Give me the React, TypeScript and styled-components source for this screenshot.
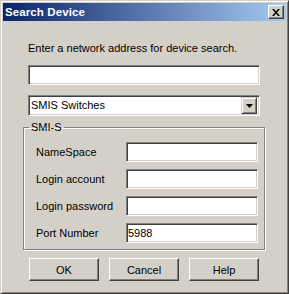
import React from 'react';
import styled, { createGlobalStyle } from 'styled-components';

const GlobalStyle = createGlobalStyle`
  html, body {
    margin: 0;
    padding: 0;
    background: #d4d0c8;
  }
  body {
    font-family: 'Liberation Sans', Arial, sans-serif;
    font-size: 11px;
    color: #000;
  }
`;

const Window = styled.div`
  box-sizing: border-box;
  width: 289px;
  height: 294px;
  background: #d4d0c8;
  border: 1px solid;
  border-color: #d4d0c8 #404040 #404040 #d4d0c8;
  box-shadow: inset 1px 1px #fff, inset -1px -1px #808080;
  padding: 2px;
  display: flex;
  flex-direction: column;
`;

const TitleBar = styled.div`
  height: 18px;
  display: flex;
  align-items: center;
  justify-content: space-between;
  padding: 0 2px 0 2px;
  background: linear-gradient(to right, #0a246a, #a6caf0);
`;

const Title = styled.span`
  color: #fff;
  font-weight: bold;
  font-size: 11.5px;
  letter-spacing: 0.1px;
`;

const CloseButton = styled.div`
  box-sizing: border-box;
  width: 16px;
  height: 14px;
  background: #d4d0c8;
  border: 1px solid;
  border-color: #fff #404040 #404040 #fff;
  box-shadow: inset -1px -1px #808080;
  display: flex;
  align-items: center;
  justify-content: center;
`;

const Content = styled.div`
  display: flex;
  flex-direction: column;
  padding: 21px 21px 0 20px;
`;

const Prompt = styled.div`
  margin-left: 5px;
  line-height: 13px;
  height: 13px;
`;

const Sunken = styled.div<{ $width: number; $height: number }>`
  box-sizing: border-box;
  width: ${(p) => p.$width}px;
  height: ${(p) => p.$height}px;
  background: #fff;
  border: 1px solid;
  border-color: #808080 #fff #fff #808080;
  box-shadow: inset 1px 1px #404040, inset -1px -1px #d4d0c8;
  display: flex;
  align-items: center;
  padding: 0 2px 0 1px;
  line-height: 13px;
`;

const AddressBox = styled(Sunken)`
  margin: 10px 0 0 5px;
`;

const Combo = styled(Sunken)`
  margin: 10px 0 0 5px;
  justify-content: space-between;
  padding-right: 2px;
`;

const ComboText = styled.span`
  padding-left: 1px;
`;

const ComboButton = styled.div`
  box-sizing: border-box;
  width: 16px;
  height: 17px;
  background: #d4d0c8;
  border: 1px solid;
  border-color: #d4d0c8 #404040 #404040 #d4d0c8;
  box-shadow: inset 1px 1px #fff, inset -1px -1px #808080;
  display: flex;
  align-items: center;
  justify-content: center;
`;

const Group = styled.fieldset`
  box-sizing: border-box;
  margin: 5px 0 0 0;
  width: 242px;
  padding: 8px 0 6px 12px;
  border: 1px solid #808080;
  box-shadow: inset 1px 1px #fff, 1px 1px #fff;
  display: grid;
  grid-template-columns: 90px 132px;
  row-gap: 7px;
  align-items: center;
`;

const Legend = styled.legend`
  margin-left: -7px;
  padding: 0 2px;
  line-height: 13px;
`;

const FieldLabel = styled.label`
  line-height: 13px;
`;

const Buttons = styled.div`
  display: flex;
  gap: 10px;
  margin: 8px 0 0 6px;
`;

const PushButton = styled.button`
  box-sizing: border-box;
  width: 70px;
  height: 23px;
  background: #d4d0c8;
  font-family: inherit;
  font-size: 11px;
  color: #000;
  padding: 0;
  border: 1px solid;
  border-color: #fff #404040 #404040 #fff;
  box-shadow: inset -1px -1px #808080, inset 1px 1px #d4d0c8;
`;

const fields = [
  { label: 'NameSpace', value: '' },
  { label: 'Login account', value: '' },
  { label: 'Login password', value: '' },
  { label: 'Port Number', value: '5988' },
];

export default function App(): React.ReactElement {
  return (
    <>
      <GlobalStyle />
      <Window>
        <TitleBar>
          <Title>Search Device</Title>
          <CloseButton>
            <svg width="8" height="7" viewBox="0 0 8 7">
              <path d="M0 0h2l2 2.5L6 0h2L5 3.5 8 7H6L4 4.5 2 7H0l3-3.5z" fill="#000" />
            </svg>
          </CloseButton>
        </TitleBar>
        <Content>
          <Prompt>Enter a network address for device search.</Prompt>
          <AddressBox $width={232} $height={20} />
          <Combo $width={232} $height={21}>
            <ComboText>SMIS Switches</ComboText>
            <ComboButton>
              <svg width="7" height="4" viewBox="0 0 7 4">
                <path d="M0 0h7L3.5 4z" fill="#000" />
              </svg>
            </ComboButton>
          </Combo>
          <Group>
            <Legend>SMI-S</Legend>
            {fields.map((f) => (
              <React.Fragment key={f.label}>
                <FieldLabel>{f.label}</FieldLabel>
                <Sunken $width={132} $height={20}>{f.value}</Sunken>
              </React.Fragment>
            ))}
          </Group>
          <Buttons>
            <PushButton>OK</PushButton>
            <PushButton>Cancel</PushButton>
            <PushButton>Help</PushButton>
          </Buttons>
        </Content>
      </Window>
    </>
  );
}
